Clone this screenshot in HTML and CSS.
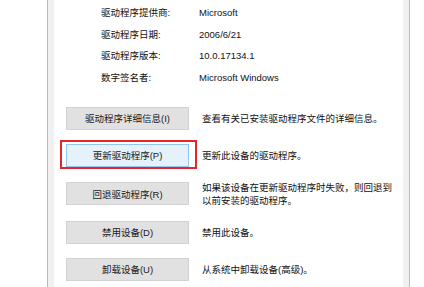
FILE: index.html
```html
<!DOCTYPE html>
<html lang="zh">
<head>
    <meta charset="UTF-8">
    <title>驱动程序</title>
    <link rel="stylesheet" href="styles.css">
</head>
<body>
    <div class="screen">
        <div class="frame">
            <div class="content">
                <div class="info">
                    <div class="row"><span class="label">驱动程序提供商:</span><span>Microsoft</span></div>
                    <div class="row"><span class="label">驱动程序日期:</span><span>2006/6/21</span></div>
                    <div class="row"><span class="label">驱动程序版本:</span><span>10.0.17134.1</span></div>
                    <div class="row"><span class="label">数字签名者:</span><span>Microsoft Windows</span></div>
                </div>
                <div class="actions">
                    <div class="action">
                        <div class="btn-wrap"><button>驱动程序详细信息(I)</button></div>
                        <div class="desc">查看有关已安装驱动程序文件的详细信息。</div>
                    </div>
                    <div class="action">
                        <div class="btn-wrap">
                            <button class="active">更新驱动程序(P)</button>
                            <span class="mark"></span>
                        </div>
                        <div class="desc">更新此设备的驱动程序。</div>
                    </div>
                    <div class="action">
                        <div class="btn-wrap"><button>回退驱动程序(R)</button></div>
                        <div class="desc">如果该设备在更新驱动程序时失败，则回退到以前安装的驱动程序。</div>
                    </div>
                    <div class="action">
                        <div class="btn-wrap"><button>禁用设备(D)</button></div>
                        <div class="desc">禁用此设备。</div>
                    </div>
                    <div class="action">
                        <div class="btn-wrap"><button>卸载设备(U)</button></div>
                        <div class="desc">从系统中卸载设备(高级)。</div>
                    </div>
                </div>
            </div>
        </div>
    </div>
</body>
</html>
```

FILE: styles.css
```css
body {
    margin: 0;
    background-color: #fff;
    color: #111;
    font-family: "Liberation Sans", "Noto Sans CJK SC", sans-serif;
    font-size: 9.5px;
}
.screen {
    display: flex;
    height: 287px;
    padding-left: 47px;
    overflow: hidden;
}
.frame {
    width: 349px;
    border-left: 1px solid #7fd2de;
    border-right: 1px solid #7fd2de;
    background-color: #f0f0f0;
    padding: 0 6px;
}
.content {
    background-color: #fff;
    height: 100%;
}
.info {
    padding: 2px 0 0 47px;
}
.row {
    display: flex;
    line-height: 21.7px;
}
.label {
    width: 98px;
}
.actions {
    display: flex;
    flex-direction: column;
    gap: 14px;
    margin-top: 18px;
    padding-left: 12px;
}
.action {
    display: flex;
    align-items: center;
    gap: 13px;
}
.btn-wrap {
    position: relative;
    flex: none;
}
.btn-wrap button {
    display: block;
    width: 123px;
    height: 23px;
    background-color: #e1e1e1;
    border: 1px solid #d2d2d2;
    color: #1a1a1a;
    font-family: inherit;
    font-size: 9.5px;
    padding: 0;
}
.btn-wrap button.active {
    background-color: #e5f1fb;
    border-color: #96c6ee;
}
.mark {
    position: absolute;
    left: -6px;
    right: -8px;
    top: -4px;
    bottom: -2px;
    border: 2px solid #e3262c;
}
.desc {
    width: 195px;
    line-height: 13px;
}
```
